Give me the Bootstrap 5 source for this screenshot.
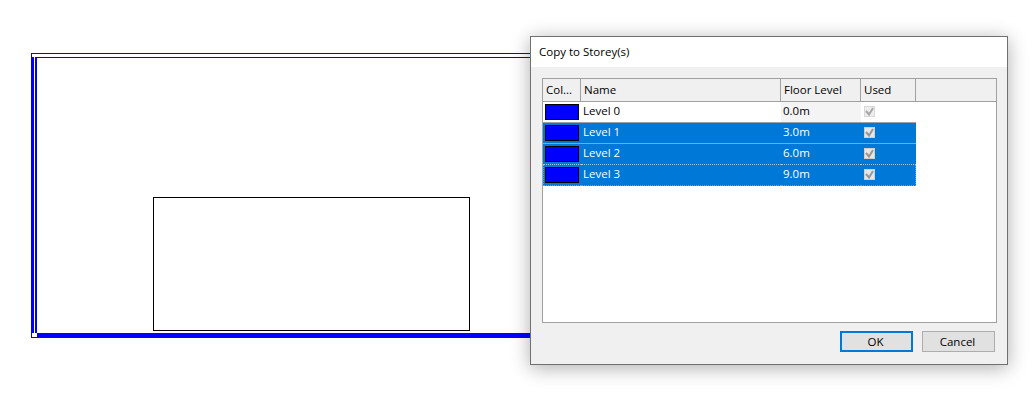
<!DOCTYPE html>
<html lang="en">
<head>
<meta charset="utf-8">
<title>Copy to Storey(s)</title>
<link href="https://cdn.jsdelivr.net/npm/bootstrap@5.3.0/dist/css/bootstrap.min.css" rel="stylesheet">
<style>
html, body { margin: 0; background: #fff; }
body { width: 1036px; height: 416px; overflow: hidden; position: relative; font-family: "Open Sans", "Noto Sans", "Liberation Sans", sans-serif; font-size: 11.5px; color: #000; }
.plan { display: block; }
.dlg { position: absolute; left: 530px; top: 36px; width: 478px; height: 329px; background: #f0f0f0; border: 1px solid #707070; box-shadow: 0 3px 18px rgba(0,0,0,.32); }
.dlg-title { height: 30px; background: #fff; padding-left: 8px; line-height: 29px; }
.dlg-body { padding: 11px 10px 0 11px; }
.gridbox { height: 245px; background: #fff; border: 1px solid #a0a0a0; margin-bottom: 8px; }
.wgrid.table { width: 453px; table-layout: fixed; border-collapse: separate; border-spacing: 0; margin: 0; font-size: 11.5px; }
.wgrid.table > :not(caption) > * > * { padding: 0 0 0 3px; height: 21px; line-height: 18px; border: 0; background: #fff; color: #000; box-shadow: none; vertical-align: top; font-weight: 400; }
.wgrid.table > thead > tr > th { height: 23px; line-height: 21px; background: #f0f0f0; border-bottom: 1px solid #a0a0a0; border-right: 1px solid #a0a0a0; padding-left: 3px; }
.wgrid.table > thead > tr > th:last-child { border-right: 0; }
.wgrid.table > tbody > tr > td:nth-child(1) { padding: 2px 0 0 2px; }
.wgrid.table > tbody > tr > td:nth-child(2) { padding-left: 2px; }
.wgrid.table > tbody > tr > td:nth-child(3) { padding-left: 2px; }
.wgrid.table > tbody > tr > td:nth-child(4) { padding-top: 4px; }
.wgrid.table > tbody > tr > td:nth-child(5) { background: #fff; border: 0; }
.wgrid.table > tbody > tr:first-child > td:nth-child(-n+4) { border-bottom: 1px solid #a0a0a0; }
.wgrid.table > tbody > tr:first-child > td:nth-child(3) { background: #f4f4f4; }
.wgrid.table > tbody > tr.sel > td:nth-child(-n+4) { background: #0078d7; color: #fff; border-bottom: 1px solid #a0a0a0; }
.wgrid.table > tbody > tr.pre > td:nth-child(-n+4) { border-bottom: 1px dotted #c0c0c0; }
.wgrid.table > tbody > tr.cur > td:nth-child(-n+4) { height: 20px; border-bottom: 1px dotted #ff7a10; }
.wgrid.table > tbody > tr.cur > td:nth-child(1) { border-left: 1px dotted #ff7a10; padding-left: 1px; }
.wgrid.table > tbody > tr.cur > td:nth-child(4) { border-right: 1px dotted #ff7a10; }
.swatch { display: block; width: 34px; height: 16px; background: #00f; border: 1px solid #000; }
.tick { display: block; }
.wbtn.btn { width: 73px; height: 21px; padding: 0 2px 0 0; font-size: 11.5px; line-height: 17px; color: #000; background: #e1e1e1; border: 1px solid #adadad; border-radius: 0; }
.wbtn.btn.dflt { border: 2px solid #0078d7; }
.btnrow { padding-right: 2px; gap: 9px; }
</style>
</head>
<body>
<svg class="plan" width="1036" height="416" viewBox="0 0 1036 416" shape-rendering="crispEdges" aria-hidden="true">
  <rect x="31" y="53" width="510" height="1" fill="#00f"/>
  <rect x="35" y="57" width="506" height="1" fill="#00f"/>
  <rect x="31" y="53" width="1" height="285" fill="#00f"/>
  <rect x="31" y="57" width="3" height="281" fill="#00f"/>
  <rect x="35" y="57" width="2" height="277" fill="#00f"/>
  <rect x="31" y="333" width="510" height="5" fill="#00f"/>
  <rect x="32" y="333" width="5" height="4" fill="#fff"/>
  <rect x="153.500" y="197.500" width="316" height="133" fill="#fff" stroke="#000" stroke-width="1"/>
</svg>
<div class="dlg d-flex flex-column">
  <div class="dlg-title">Copy to Storey(s)</div>
  <div class="dlg-body">
    <div class="gridbox">
      <table class="table wgrid">
        <colgroup><col style="width:38px"><col style="width:200px"><col style="width:80px"><col style="width:55px"><col style="width:80px"></colgroup>
        <thead><tr><th>Col...</th><th>Name</th><th>Floor Level</th><th>Used</th><th></th></tr></thead>
        <tbody>
          <tr>
            <td><span class="swatch"></span></td><td>Level 0</td><td>0.0m</td>
            <td><svg class="tick" width="11" height="11" viewBox="0 0 11 11"><rect x=".5" y=".5" width="10" height="10" fill="#eee" stroke="#d8d8d8"/><path d="M2 5l3 3.500 4-6.500" fill="none" stroke="#a8a8a8" stroke-width="2"/></svg></td><td></td>
          </tr>
          <tr class="sel">
            <td><span class="swatch"></span></td><td>Level 1</td><td>3.0m</td>
            <td><svg class="tick" width="11" height="11" viewBox="0 0 11 11"><rect x=".5" y=".5" width="10" height="10" fill="#e6e6e6" stroke="#cfcfcf"/><path d="M2 5l3 3.500 4-6.500" fill="none" stroke="#989898" stroke-width="2"/></svg></td><td></td>
          </tr>
          <tr class="sel pre">
            <td><span class="swatch"></span></td><td>Level 2</td><td>6.0m</td>
            <td><svg class="tick" width="11" height="11" viewBox="0 0 11 11"><rect x=".5" y=".5" width="10" height="10" fill="#e6e6e6" stroke="#cfcfcf"/><path d="M2 5l3 3.500 4-6.500" fill="none" stroke="#989898" stroke-width="2"/></svg></td><td></td>
          </tr>
          <tr class="sel cur">
            <td><span class="swatch"></span></td><td>Level 3</td><td>9.0m</td>
            <td><svg class="tick" width="11" height="11" viewBox="0 0 11 11"><rect x=".5" y=".5" width="10" height="10" fill="#e6e6e6" stroke="#cfcfcf"/><path d="M2 5l3 3.500 4-6.500" fill="none" stroke="#989898" stroke-width="2"/></svg></td><td></td>
          </tr>
        </tbody>
      </table>
    </div>
    <div class="d-flex justify-content-end btnrow">
      <button type="button" class="btn wbtn dflt">OK</button>
      <button type="button" class="btn wbtn">Cancel</button>
    </div>
  </div>
</div>
<script src="https://cdn.jsdelivr.net/npm/bootstrap@5.3.0/dist/js/bootstrap.bundle.min.js"></script>
</body>
</html>
